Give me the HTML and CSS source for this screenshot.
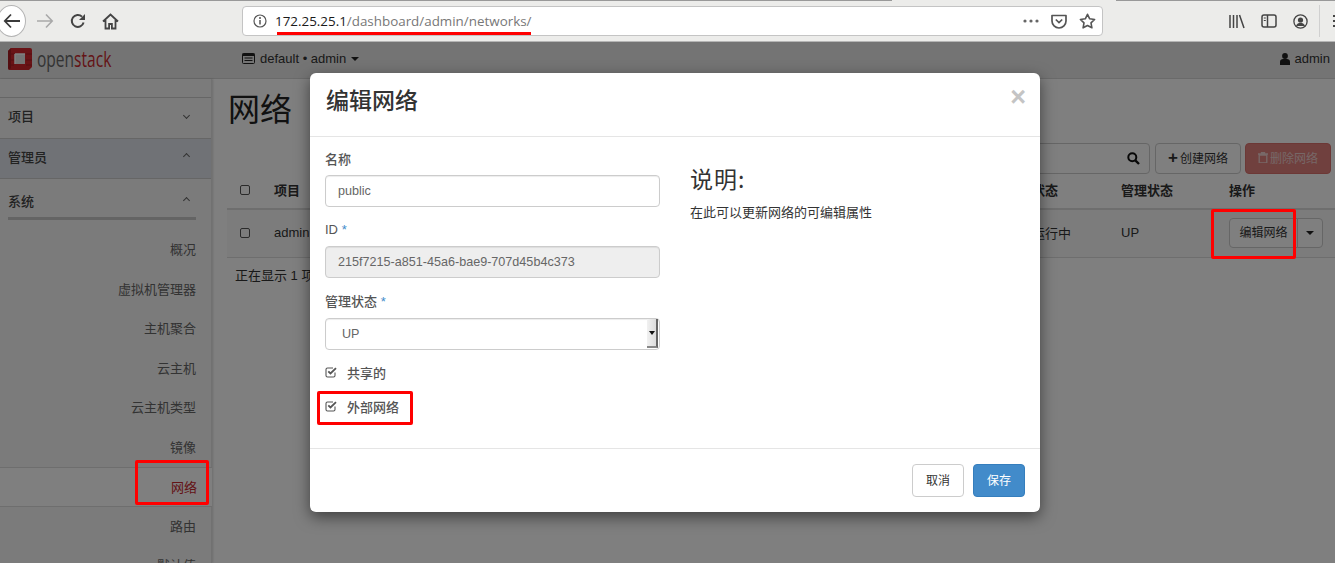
FILE: index.html
```html
<!doctype html>
<html lang="zh-CN">
  <head>
    <meta charset="UTF-8" />
    <meta name="viewport" content="width=device-width, initial-scale=1.0" />
    <title>编辑网络</title>
    <link rel="stylesheet" href="styles.css">
  </head>
  <body>
    <!-- browser chrome -->
    <header class="browser">
      <div class="nav-buttons">
        <span class="back-btn">
          <svg width="18" height="18" viewBox="0 0 18 18"><path d="M8 2.5 1.8 9 8 15.5M2 9h15" fill="none" stroke="#3b3b3b" stroke-width="1.8"/></svg>
        </span>
        <svg class="fwd" width="18" height="18" viewBox="0 0 18 18"><path d="M10 2.5 16.2 9 10 15.5M16 9H1" fill="none" stroke="#a9a9a9" stroke-width="1.6"/></svg>
        <svg class="reload" width="16" height="16" viewBox="0 0 16 16"><path d="M13.6 9.5A6 6 0 1 1 12 3.6" fill="none" stroke="#444" stroke-width="2"/><path d="M15 1v6H9z" fill="#444"/></svg>
        <svg class="home" width="17" height="17" viewBox="0 0 17 17"><path d="M1 8.5 8.5 1.5 16 8.5M3.5 7v8.5h3.6v-4.5h2.8v4.5h3.6V7" fill="none" stroke="#444" stroke-width="1.8"/></svg>
      </div>
      <div class="urlbar">
        <svg class="info" width="14" height="14" viewBox="0 0 14 14"><circle cx="7" cy="7" r="6" fill="none" stroke="#555" stroke-width="1.2"/><path d="M7 6v4.4" stroke="#555" stroke-width="1.5"/><circle cx="7" cy="3.9" r="1" fill="#555"/></svg>
        <span class="url"><b>172.25.25.1</b>/dashboard/admin/networks/</span>
        <span class="url-icons">
          <svg width="16" height="4" viewBox="0 0 16 4"><circle cx="2" cy="2" r="1.6" fill="#666"/><circle cx="8" cy="2" r="1.6" fill="#666"/><circle cx="14" cy="2" r="1.6" fill="#666"/></svg>
          <svg width="16" height="15" viewBox="0 0 16 15"><path d="M1 1.5h14v5.5a7 7 0 0 1-14 0z" fill="none" stroke="#555" stroke-width="1.7" stroke-linejoin="round"/><path d="M4.8 5.5 8 8.6l3.2-3.1" fill="none" stroke="#555" stroke-width="1.7"/></svg>
          <svg width="17" height="16" viewBox="0 0 17 16"><path d="M8.5 1.3 10.7 5.8l4.9.7-3.6 3.4.9 4.9-4.4-2.3-4.4 2.3.9-4.9-3.6-3.4 4.9-.7z" fill="none" stroke="#555" stroke-width="1.6" stroke-linejoin="round"/></svg>
        </span>
      </div>
      <div class="tools">
        <svg width="16" height="15" viewBox="0 0 16 15"><path d="M1 1v13M4.5 1v13M8 1v13M10.5 1l4.5 13" stroke="#444" stroke-width="1.5" fill="none"/></svg>
        <svg width="16" height="14" viewBox="0 0 16 14"><rect x="1" y="1" width="14" height="12" rx="2" fill="none" stroke="#444" stroke-width="1.5"/><path d="M6.5 1v12" stroke="#444" stroke-width="1.5"/><path d="M2.8 4h2M2.8 6.5h2" stroke="#444"/></svg>
        <svg width="15" height="15" viewBox="0 0 15 15"><circle cx="7.5" cy="7.5" r="6.6" fill="none" stroke="#444" stroke-width="1.3"/><circle cx="7.5" cy="6" r="2.6" fill="#444"/><path d="M3 12c.8-2.4 2.5-3.2 4.5-3.2s3.7.8 4.5 3.2z" fill="#444"/></svg>
        <span class="tool-sep"></span>
        <span class="menu-btn"><i></i><i></i><i></i></span>
      </div>
    </header>

    <div class="app">
      <nav class="navbar">
        <div class="brand">
          <svg width="26" height="24" viewBox="0 0 26 24"><path d="M4 1h19a2 2 0 0 1 2 2v17l-3 3H3a2 2 0 0 1-2-2V4z" fill="#d3262c"/><path d="M1 7h6M1 13h6M1 18h6M19 7h6M19 13h6M19 18h6" stroke="#a81c22"/><path d="M1 4 4 1v20l-2 2-1-2z" fill="#a81c22"/><rect x="8" y="7" width="10" height="10" fill="#e8e8e8"/><path d="M8 7h10M8 7v10" stroke="#fff" stroke-width="1.5"/></svg>
          <span class="brand-name">open<em>stack</em></span>
        </div>
        <div class="context">
          <svg width="13" height="11" viewBox="0 0 13 11"><rect x=".5" y=".5" width="12" height="10" rx="1" fill="none" stroke="#222"/><rect x=".5" y=".5" width="12" height="2.5" fill="#222"/><path d="M2.5 5h8M2.5 7.5h8" stroke="#222"/></svg>
          <span>default • admin</span>
          <span class="caret"></span>
        </div>
        <div class="user">
          <svg width="10" height="12" viewBox="0 0 10 12"><circle cx="5" cy="3" r="2.9" fill="#222"/><path d="M0 12V8.800C0 7 1.500 6 3 6h4c1.500 0 3 1 3 2.800V12z" fill="#222"/></svg>
          <span>admin</span>
        </div>
      </nav>

      <div class="main">
        <aside class="sidebar">
          <div class="side-head first"><span>项目</span><span class="chev down"></span></div>
          <div class="side-head admin"><span>管理员</span><span class="chev up"></span></div>
          <div class="side-group"><span>系统</span><span class="chev up"></span></div>
          <ul class="side-list">
            <li>概况</li>
            <li>虚拟机管理器</li>
            <li>主机聚合</li>
            <li>云主机</li>
            <li>云主机类型</li>
            <li>镜像</li>
            <li class="active">网络</li>
            <li>路由</li>
            <li>默认值</li>
          </ul>
        </aside>

        <section class="content">
          <h1>网络</h1>
          <div class="actions">
            <div class="search">
              <svg width="13" height="13" viewBox="0 0 13 13"><circle cx="5.3" cy="5.3" r="4" fill="none" stroke="#111" stroke-width="2"/><path d="M8.300 8.300 12 12" stroke="#111" stroke-width="2.4"/></svg>
            </div>
            <span class="btn"><b class="plus">+</b>创建网络</span>
            <span class="btn danger">
              <svg width="10" height="11" viewBox="0 0 10 11"><path d="M0 2h10M3.500 2V.6h3V2M1.200 3h7.600v8H1.200z" fill="none" stroke="#f0d0cf" stroke-width="1.3"/></svg>删除网络
            </span>
          </div>
          <div class="net-row net-head">
            <span class="check"></span>
            <span>项目</span>
            <span>状态</span>
            <span>管理状态</span>
            <span>操作</span>
          </div>
          <div class="net-row net-body">
            <span class="check"></span>
            <span>admin</span>
            <span>运行中</span>
            <span>UP</span>
            <span class="btn-group">
              <span class="btn">编辑网络</span>
              <span class="btn split"><span class="caret"></span></span>
            </span>
          </div>
          <p class="count">正在显示 1 项</p>
        </section>
      </div>

      <div class="backdrop"></div>

      <div class="modal">
        <div class="modal-head">
          <h3>编辑网络</h3>
          <span class="close">&times;</span>
        </div>
        <div class="modal-body">
          <form class="modal-form">
            <label class="field-label">名称</label>
            <div class="input">public</div>
            <label class="field-label">ID <em>*</em></label>
            <div class="input readonly">215f7215-a851-45a6-bae9-707d45b4c373</div>
            <label class="field-label">管理状态 <em>*</em></label>
            <div class="input select">
              <span>UP</span>
              <span class="select-arrow"></span>
            </div>
            <div class="check-row">
              <svg width="12" height="12" viewBox="0 0 12 12"><path d="M10 6.500V9.500a1.500 1.500 0 0 1-1.500 1.500H2.500A1.500 1.500 0 0 1 1 9.500V3.500A1.500 1.500 0 0 1 2.500 2H8" fill="none" stroke="#555" stroke-width="1.1"/><path d="M3.300 5.300 5.500 7.500 11 2.200" fill="none" stroke="#555" stroke-width="1.8"/></svg>
              <span>共享的</span>
            </div>
            <div class="check-row">
              <svg width="12" height="12" viewBox="0 0 12 12"><path d="M10 6.500V9.500a1.500 1.500 0 0 1-1.500 1.500H2.500A1.500 1.500 0 0 1 1 9.500V3.500A1.500 1.500 0 0 1 2.500 2H8" fill="none" stroke="#555" stroke-width="1.1"/><path d="M3.300 5.300 5.500 7.500 11 2.200" fill="none" stroke="#555" stroke-width="1.8"/></svg>
              <span>外部网络</span>
            </div>
          </form>
          <div class="modal-help">
            <h3>说明:</h3>
            <p>在此可以更新网络的可编辑属性</p>
          </div>
        </div>
        <div class="modal-foot">
          <span class="btn cancel">取消</span>
          <span class="btn primary">保存</span>
        </div>
      </div>

      <!-- red annotation marks -->
      <span class="mark mark-nav"></span>
      <span class="mark mark-ext"></span>
      <span class="mark mark-edit"></span>
    </div>
    <span class="url-line"></span>
  </body>
</html>
```

FILE: styles.css
```css
* {
  box-sizing: border-box;
}

html, body {
  height: 563px;
  overflow: hidden;
}

body {
  margin: 0;
  position: relative;
  font-family: "Liberation Sans", "Noto Sans CJK SC", sans-serif;
  font-size: 13px;
  color: #333;
  background: #fff;
}

/* browser toolbar */
.browser {
  height: 42px;
  display: flex;
  align-items: center;
  padding-top: 1px;
  background: #ececea linear-gradient(90deg, #999 892px, transparent 892px, transparent 1116px, #999 1116px) no-repeat 0 0 / 100% 1px;
  border-bottom: 1px solid #b5b5b5;
}

.nav-buttons {
  width: 242px;
  flex-shrink: 0;
  display: flex;
  align-items: center;
}

.back-btn {
  width: 29px;
  height: 32px;
  margin-left: -3px;
  display: flex;
  align-items: center;
  justify-content: center;
  background: #fff;
  border: 1px solid #b4b4b4;
  border-radius: 50%;
}

.fwd {
  margin-left: 10px;
}

.reload {
  margin-left: 16px;
}

.home {
  margin-left: 16px;
}

.urlbar {
  width: 861px;
  height: 30px;
  flex-shrink: 0;
  display: flex;
  align-items: center;
  padding: 0 6px 0 10px;
  background: #fff;
  border: 1px solid #c4c4c4;
  border-radius: 4px;
}

.url {
  margin-left: 8px;
  font-family: "Open Sans", sans-serif;
  font-size: 13.4px;
  color: #777;
}

.url b {
  font-weight: 400;
  color: #1a1a1a;
}

.url-icons {
  margin-left: auto;
  display: flex;
  align-items: center;
  gap: 12px;
}

.tools {
  display: flex;
  align-items: center;
  gap: 16px;
  margin-left: 126px;
}

.tool-sep {
  width: 1px;
  height: 32px;
  margin-left: -5px;
  background: #d0d0d0;
}

.menu-btn {
  display: flex;
  flex-direction: column;
  gap: 3px;
  margin-left: -3px;
}

.menu-btn i {
  width: 10px;
  height: 2px;
  background: #444;
}

.url-line {
  position: absolute;
  left: 277px;
  top: 32px;
  width: 254px;
  height: 3px;
  background: #f00;
}

/* horizon page */
.app {
  position: relative;
  height: 521px;
  overflow: hidden;
}

.navbar {
  height: 37px;
  display: flex;
  align-items: center;
  padding: 0 5px 3px 7px;
  background: #e8e8e8;
  border-bottom: 1px solid #d4d4d4;
}

.brand {
  width: 235px;
  display: flex;
  align-items: center;
  gap: 4px;
}

.brand-name {
  display: inline-block;
  font-family: "Open Sans", sans-serif;
  font-size: 21px;
  color: #666;
  transform: scaleX(.74);
  transform-origin: left center;
}

.brand-name em {
  font-style: normal;
  color: #c8282e;
}

.context {
  display: flex;
  align-items: center;
  gap: 5px;
}

.caret {
  display: inline-block;
  border-top: 4px solid #222;
  border-left: 4px solid transparent;
  border-right: 4px solid transparent;
}

.user {
  margin-left: auto;
  display: flex;
  align-items: center;
  gap: 5px;
}

.main {
  display: flex;
  height: 484px;
}

.sidebar {
  width: 212px;
  flex-shrink: 0;
  padding-top: 18px;
  background: #f6f6f6;
  border-right: 1px solid #e2e2e2;
  box-shadow: 1px 0 2px rgba(0, 0, 0, .15);
}

.side-head {
  height: 41px;
  display: flex;
  align-items: center;
  justify-content: space-between;
  padding: 0 22px 5px 8px;
  font-weight: 500;
  color: #444;
  border-top: 1px solid #ccc;
}

.side-head.admin {
  background: #e0e5ec;
  border-bottom: 1px solid #ccc;
}

.side-group {
  height: 41px;
  margin: 0 15px 0 8px;
  padding: 4px 7px 0 0;
  display: flex;
  align-items: center;
  justify-content: space-between;
  font-weight: 500;
  color: #444;
  border-bottom: 3px solid #c8c8c8;
}

.chev {
  width: 5px;
  height: 5px;
  border-left: 1px solid #666;
  border-top: 1px solid #666;
}

.chev.down {
  transform: rotate(225deg);
}

.chev.up {
  transform: rotate(45deg);
}

.side-list {
  list-style: none;
  margin: 10px 0 0;
  padding: 0;
}

.side-list li {
  height: 39.5px;
  line-height: 39px;
  padding-right: 15px;
  text-align: right;
  color: #666;
}

.side-list li.active {
  margin-right: -1px;
  background: #fff;
  color: #c8282e;
  border-top: 1px solid #ddd;
  border-bottom: 1px solid #ddd;
}

.content {
  flex: 1;
  padding-left: 15px;
}

.content h1 {
  margin: 6px 0 0 1px;
  font-size: 32px;
  line-height: 50px;
  font-weight: 400;
  color: #222;
}

.actions {
  display: flex;
  justify-content: flex-end;
  align-items: center;
  gap: 4px;
  margin-top: 8px;
  padding-right: 4px;
}

.search {
  width: 350px;
  height: 31px;
  margin-right: 1px;
  display: flex;
  align-items: center;
  justify-content: flex-end;
  padding-right: 9px;
  border: 1px solid #ccc;
  border-radius: 4px;
}

.btn {
  height: 31px;
  display: inline-flex;
  align-items: center;
  justify-content: center;
  gap: 2px;
  padding: 0 0 2px;
  font-size: 12px;
  color: #333;
  background: #fff;
  border: 1px solid #ccc;
  border-radius: 4px;
}

.actions .btn {
  width: 86px;
}

.plus {
  font-size: 17px;
  line-height: 1;
}

.btn.danger {
  color: #eecfce;
  background: #e0807d;
  border-color: #d9706c;
}

.net-row {
  display: grid;
  grid-template-columns: 47px 758px 89px 108px 1fr;
  align-items: center;
}

.net-head {
  height: 36px;
  padding-bottom: 3px;
  font-weight: 600;
  border-bottom: 2px solid #ddd;
}

.net-body {
  height: 48px;
  padding-bottom: 2px;
  background: #f9f9f9;
  border-bottom: 1px solid #ddd;
}

.check {
  width: 10px;
  height: 10px;
  margin-left: 13px;
  border: 1px solid #555;
  border-radius: 2px;
}

.btn-group {
  display: inline-flex;
}

.btn-group .btn {
  width: 69px;
  height: 30px;
  padding: 0 0 2px;
  border-radius: 4px 0 0 4px;
}

.btn-group .split {
  width: 26px;
  padding: 0;
  margin-left: -1px;
  border-radius: 0 4px 4px 0;
}

.count {
  margin: 9px 0 0 8px;
  line-height: 18px;
}

.backdrop {
  position: absolute;
  inset: 0;
  background: rgba(0, 0, 0, .5);
}

/* modal */
.modal {
  position: absolute;
  left: 310px;
  top: 31px;
  width: 730px;
  height: 439px;
  display: flex;
  flex-direction: column;
  background: #fff;
  border-radius: 6px;
  box-shadow: 0 5px 15px rgba(0, 0, 0, .5);
}

.modal-head {
  height: 64px;
  display: flex;
  justify-content: space-between;
  padding: 13px 14px 0 16px;
  border-bottom: 1px solid #e5e5e5;
}

.modal-head h3 {
  margin: 0;
  font-size: 23px;
  line-height: 30px;
  font-weight: 500;
  color: #333;
}

.close {
  font-size: 27px;
  line-height: 22px;
  font-weight: 700;
  color: #c4c4c4;
}

.modal-body {
  flex: 1;
  display: flex;
  padding: 0 15px;
}

.modal-form {
  width: 335px;
  padding-top: 14px;
}

.field-label {
  display: block;
  height: 18px;
  line-height: 18px;
  margin-bottom: 7px;
  font-weight: 500;
  color: #555;
}

.field-label:first-child {
  margin-bottom: 6px;
}

.field-label em {
  font-style: normal;
  color: #428bca;
}

.input {
  height: 32px;
  display: flex;
  align-items: center;
  margin-bottom: 14px;
  padding: 0 12px 1px;
  font-size: 12.6px;
  color: #666;
  background: #fff;
  border: 1px solid #ccc;
  border-radius: 4px;
  box-shadow: inset 0 1px 1px rgba(0, 0, 0, .075);
}

.input.readonly {
  margin-bottom: 15px;
  background: #eee;
}

.input.select {
  justify-content: space-between;
  padding: 0 1px 1px 16px;
  margin-bottom: 5px;
}

.select-arrow {
  position: relative;
  width: 11px;
  height: 29px;
  background: linear-gradient(90deg, #f1f1f1, #dcdcdc);
  border-right: 2px solid #666;
  border-bottom: 2px solid #888;
}

.select-arrow::after {
  content: "";
  position: absolute;
  left: 2px;
  top: 12px;
  border-top: 4px solid #111;
  border-left: 3px solid transparent;
  border-right: 3px solid transparent;
}

.check-row {
  height: 34px;
  display: flex;
  align-items: center;
  gap: 10px;
  font-weight: 500;
  color: #555;
}

.modal-help {
  margin-left: 30px;
  padding-top: 26px;
}

.modal-help h3 {
  margin: 0;
  font-family: "Noto Sans CJK SC", sans-serif;
  font-size: 23px;
  line-height: 30px;
  font-weight: 400;
  letter-spacing: 1px;
  color: #333;
}

.modal-help p {
  margin: 11px 0 0;
  line-height: 18px;
}

.modal-foot {
  height: 64px;
  display: flex;
  justify-content: flex-end;
  align-items: flex-start;
  gap: 9px;
  padding: 15px 15px 0;
  border-top: 1px solid #e5e5e5;
}

.modal-foot .btn {
  width: 52px;
  height: 33px;
  padding-bottom: 3px;
}

.btn.primary {
  color: #fff;
  background: #428bca;
  border-color: #357ebd;
}

/* red annotation marks */
.mark {
  position: absolute;
  border: 3px solid #f00;
  border-radius: 2px;
}

.mark-nav {
  left: 135px;
  top: 418px;
  width: 74px;
  height: 45px;
}

.mark-ext {
  left: 317px;
  top: 349px;
  width: 96px;
  height: 34px;
}

.mark-edit {
  left: 1211px;
  top: 167px;
  width: 85px;
  height: 50px;
}
```
